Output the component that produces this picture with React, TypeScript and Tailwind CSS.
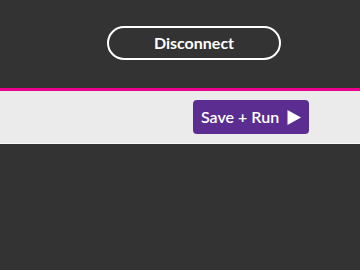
import React from "react";

export default function App() {
  return (
    <div className="w-[360px] h-[270px] bg-[#333333] flex flex-col" style={{ fontFamily: "Lato, 'Open Sans', sans-serif" }}>
      <div className="h-[88px] flex items-start pt-[26px] pl-[107px]">
        <button className="w-[174px] h-[34px] rounded-full border-2 border-white text-white font-bold text-[16px] flex items-center justify-center">
          Disconnect
        </button>
      </div>
      <div className="h-[3px] bg-[#ec008c]" />
      <div className="h-[53px] bg-[#ebebeb] border-b border-[#f8f8f8] flex items-start justify-end pt-[9px] pr-[51px]">
        <button className="w-[116px] h-[34px] rounded-[4px] bg-[#5c2d91] text-white text-[16px] font-semibold flex items-center pl-[8px] gap-[8px]">
          <span>Save + Run</span>
          <svg width="14" height="15" viewBox="0 0 14 15">
            <polygon points="0.5,0 14,7.5 0.5,15" fill="white" />
          </svg>
        </button>
      </div>
    </div>
  );
}
